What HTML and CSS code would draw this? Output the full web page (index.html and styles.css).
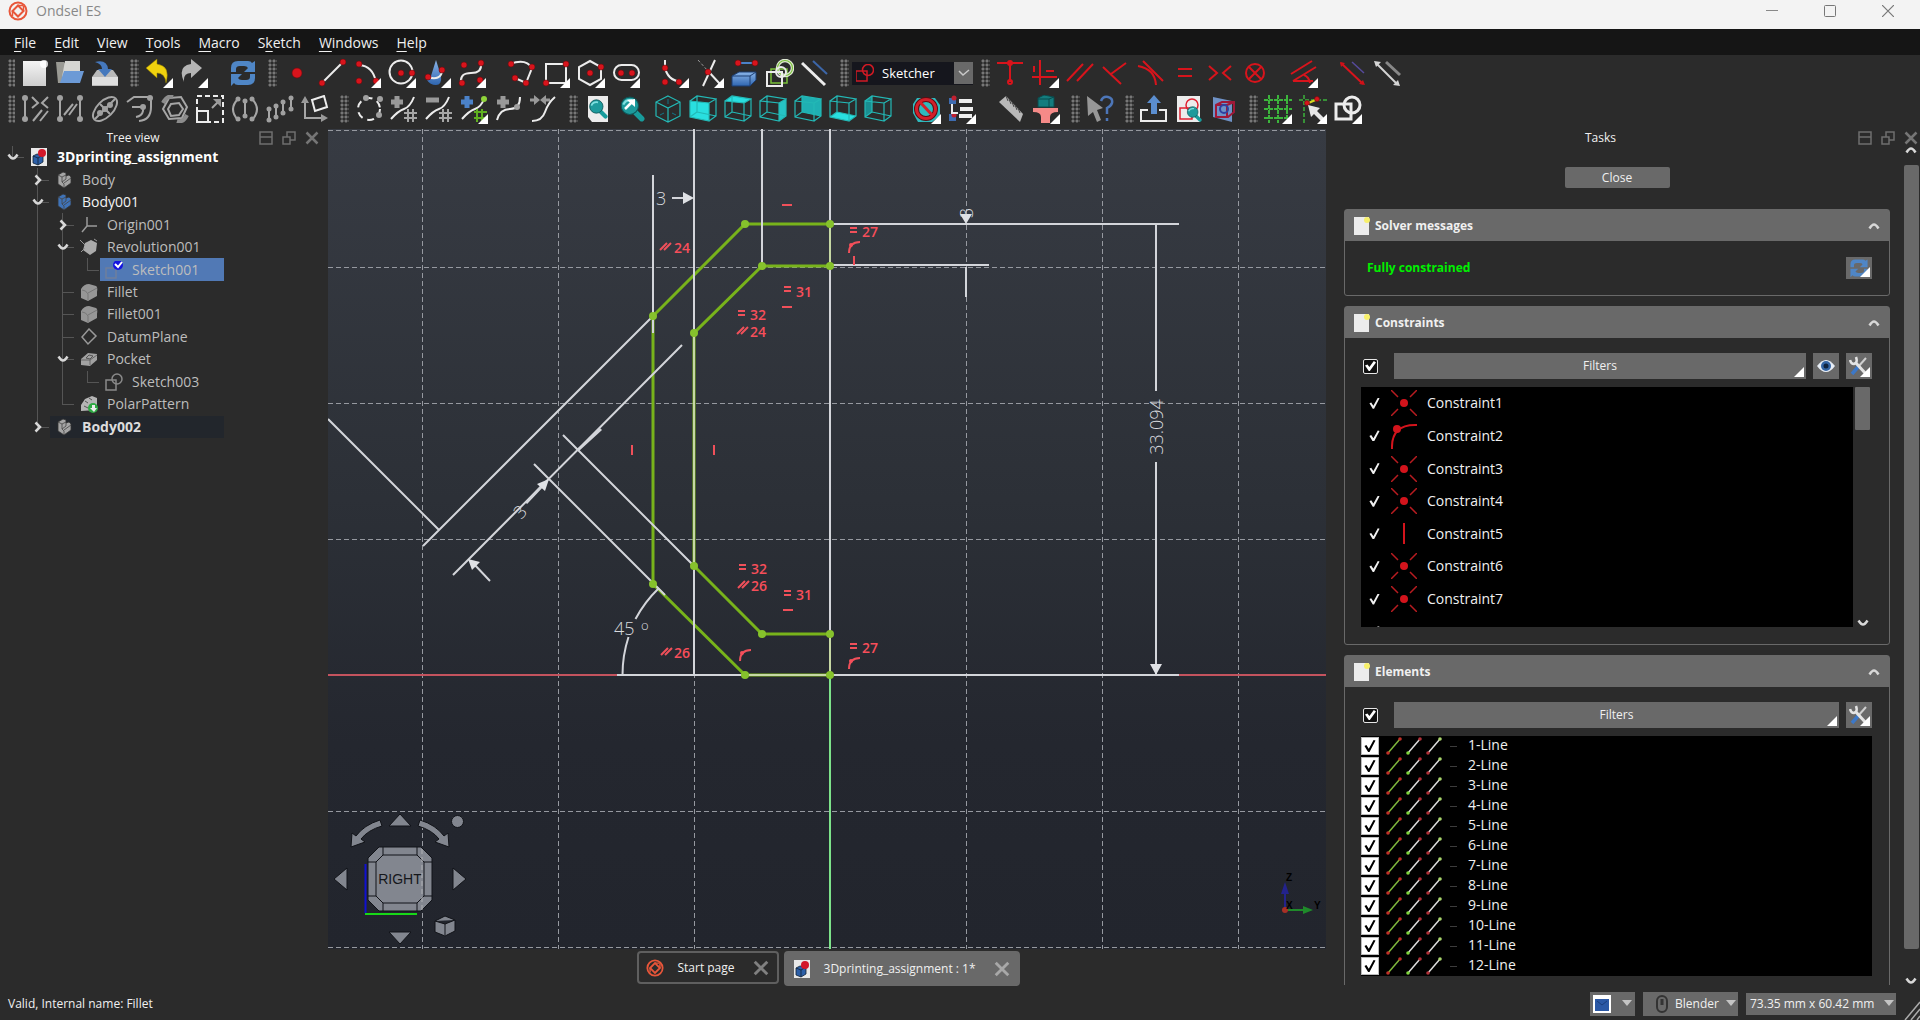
FILE: index.html
```html
<!DOCTYPE html>
<html lang="en">
<head>
<meta charset="utf-8">
<title>Ondsel ES</title>
<link rel="stylesheet" href="styles.css">
</head>
<body>
<svg class="defs" aria-hidden="true">
  <defs>
    <linearGradient id="gBlue" x1="0" y1="0" x2="0" y2="1"><stop offset="0" stop-color="#8ab4e8"/><stop offset="1" stop-color="#2f66b0"/></linearGradient>
    <linearGradient id="gGrey" x1="0" y1="0" x2="0" y2="1"><stop offset="0" stop-color="#f4f4f4"/><stop offset="1" stop-color="#cdcdcd"/></linearGradient>
  </defs>
  <symbol id="logo" viewBox="0 0 20 20"><circle cx="10" cy="10" r="8.500" fill="none" stroke="#e8563a" stroke-width="2"/><path d="M10 4.500l5.500 5.500-5.500 5.500L4.500 10z" fill="none" stroke="#e8563a" stroke-width="2"/><path d="M4.500 10v5M10 4.500h5M15.500 10V5" stroke="#e8563a" stroke-width="1.500"/></symbol>
  <symbol id="doc" viewBox="0 0 18 18"><path d="M1 0h16v18H1z" fill="#e9e9e9"/><path d="M3 8l4-2 6 1v7l-5 3-5-2z" fill="#2c5fa8" stroke="#123" stroke-width=".8"/><path d="M3 8l5 2v7M8 10l5-3" fill="none" stroke="#123" stroke-width=".8"/><circle cx="12" cy="5" r="4" fill="#d3182a"/></symbol>
  <symbol id="wire" viewBox="0 0 28 28"><path d="M1 6l19 2v18L1 22zM1 6L8 1l19 3-7 4M27 4v17l-7 5M8 1v16l-7 5M8 17l19 4" fill="none" stroke="#23b9b6" stroke-width="1.200"/></symbol>
  <symbol id="body" viewBox="0 0 18 18"><path d="M3 4l5-3 3 1v3l3-1 2 2v6l-7 5-6-4z" fill="currentColor" stroke="#333" stroke-width=".8"/><path d="M3 4l4 2v5l2 2v4M7 6l4-2M9 12l7-5M7 11l4-3V5" fill="none" stroke="#444" stroke-width=".8"/></symbol>
  <symbol id="fillet" viewBox="0 0 18 18"><path d="M1 6q3-5 8-5l7 2q2 1 1 6v4l-9 5-7-3z" fill="#969696"/><path d="M2 7q4 0 6 4v6M8 10l9-5" fill="none" stroke="#777"/></symbol>
  <symbol id="sketch" viewBox="0 0 18 18"><path d="M1 7h10v10H1z" fill="none" stroke="currentColor" stroke-width="1.500"/><circle cx="12" cy="6" r="5" fill="none" stroke="currentColor" stroke-width="1.500"/></symbol>
  <symbol id="note" viewBox="0 0 16 20"><path d="M0 1h15v18H0z" fill="#ececec"/><circle cx="13" cy="4" r="3" fill="#f7f06a"/></symbol>
  <symbol id="up" viewBox="0 0 12 8"><path d="M1.500 6.500Q4 2.500 6 2.500T10.500 6.500" fill="none" stroke="#d8d8d8" stroke-width="2.500"/></symbol>
  <symbol id="down" viewBox="0 0 12 8"><path d="M1.500 1.500Q4 5.500 6 5.500T10.500 1.500" fill="none" stroke="#d8d8d8" stroke-width="2.500"/></symbol>
  <symbol id="right" viewBox="0 0 8 12"><path d="M1.500 1.500L6 6l-4.500 4.500" fill="none" stroke="#d8d8d8" stroke-width="2.500"/></symbol>
  <symbol id="dock" viewBox="0 0 14 14"><path d="M1 1h12v12H1zM1 6h12" fill="none" stroke="#6f6f6f" stroke-width="1.500"/></symbol>
  <symbol id="float" viewBox="0 0 14 14"><path d="M1 6h7v7H1zM5 6V1h8v8H8" fill="none" stroke="#6f6f6f" stroke-width="1.500"/></symbol>
  <symbol id="x" viewBox="0 0 14 14"><path d="M1.500 1.500l11 11m0-11l-11 11" stroke="currentColor" stroke-width="2.500"/></symbol>
  <symbol id="point" viewBox="0 0 26 26"><path d="M0 0l7 7M26 0l-7 7M0 26l7-7M26 26l-7-7" stroke="#b81c20" stroke-width="1.500"/><circle cx="13" cy="13" r="4" fill="#d3141c"/></symbol>
  <symbol id="on-arc" viewBox="0 0 26 26"><path d="M1 26Q0 1 26 2" fill="none" stroke="#d3141c" stroke-width="2"/><circle cx="6" cy="6" r="4" fill="#d3141c"/></symbol>
  <symbol id="vert" viewBox="0 0 26 26"><path d="M13 2v21" stroke="#d3141c" stroke-width="2"/></symbol>
  <symbol id="lines" viewBox="0 0 56 18">
    <path d="M2 16L14 2" stroke="#7fb83c" stroke-width="1.500"/><circle cx="2" cy="16" r="1.800" fill="#c23028"/><circle cx="14" cy="2" r="1.800" fill="#c23028"/>
    <path d="M22 16L34 2" stroke="#ddd" stroke-width="1.500"/><circle cx="22" cy="16" r="1.800" fill="#7fd63c"/><circle cx="34" cy="2" r="1.800" fill="#b23038"/>
    <path d="M42 16L54 2" stroke="#ddd" stroke-width="1.500"/><circle cx="42" cy="16" r="1.800" fill="#b23038"/><circle cx="54" cy="2" r="1.800" fill="#a9d66c"/>
  </symbol>
  <symbol id="tools" viewBox="0 0 20 20"><path d="M17 2l-8 9" stroke="#cfcfcf" stroke-width="2"/><path d="M9 11l-6 7" stroke="#3c78c8" stroke-width="3.500"/><path d="M6 6l11 12" stroke="#e4e4e4" stroke-width="3"/><path d="M1 4q1 4 4 4 4-1 2-7" fill="none" stroke="#e4e4e4" stroke-width="2.500"/></symbol>
  <symbol id="sync" viewBox="0 0 28 28"><path d="M2 13V9q0-7 7-7h10q3 0 4 2l3-2v11H15l4-4q-1-2-4-2h-4q-4 0-4 3v3zM26 15v4q0 7-7 7H9q-3 0-4-2l-3 3V15h11l-4 4q1 2 4 2h4q4 0 4-3v-3z" fill="#4f86c6"/></symbol>
  <symbol id="glass" viewBox="0 0 24 24"><path d="M15 15l6 6" stroke="#189c9c" stroke-width="5" stroke-linecap="round"/><circle cx="10" cy="9" r="8" fill="#1d9a9c" stroke="#0e5658"/><path d="M4 8q2-5 8-4" fill="none" stroke="#7fe0e0" stroke-width="2"/></symbol>
  <symbol id="caret" viewBox="0 0 10 7"><path d="M0 0h10L5 6z" fill="#c4c4c4"/></symbol>
</svg>

<div class="app">
  <header class="titlebar">
    <svg class="logo"><use href="#logo"/></svg>
    <span class="app-name">Ondsel ES</span>
    <div class="win">
      <button aria-label="Minimize"><svg viewBox="0 0 12 12"><path d="M0 5.500h12" stroke="#888"/></svg></button>
      <button aria-label="Maximize"><svg viewBox="0 0 12 12"><rect x=".5" y=".5" width="11" height="11" rx="1" fill="none" stroke="#777"/></svg></button>
      <button aria-label="Close window"><svg viewBox="0 0 12 12"><path d="M0 0l12 12M12 0L0 12" stroke="#777" stroke-width="1.200"/></svg></button>
    </div>
  </header>

  <nav class="menubar">
    <button><u>F</u>ile</button><button><u>E</u>dit</button><button><u>V</u>iew</button><button><u>T</u>ools</button><button><u>M</u>acro</button><button>S<u>k</u>etch</button><button><u>W</u>indows</button><button><u>H</u>elp</button>
  </nav>

  <div class="toolbars">
    <div class="toolbar">
      <i class="grip"></i>
      <button aria-label="New"><svg viewBox="0 0 28 28"><path d="M2 2h23v25H2z" fill="url(#gGrey)"/><circle cx="23" cy="5" r="4" fill="#fff" opacity=".8"/></svg></button>
      <button aria-label="Open"><svg viewBox="0 0 28 28"><path d="M0 3h8l2 3v18H2z" fill="#9a9a94"/><path d="M9 2h15v16H6z" fill="#d6d6d2"/><path d="M4 24l4-12h20l-4 12z" fill="#6c9ad6"/></svg></button>
      <button aria-label="Save"><svg viewBox="0 0 28 28"><path d="M6 11h16l5 7v9H1v-9z" fill="#b9b9b9"/><path d="M1 18h26v8H1z" fill="#dedede"/><path d="M4 3q12-3 13 7h4l-7 8-7-8h4Q11 5 4 3z" fill="#4578bd"/></svg></button>
      <i class="grip"></i>
      <button class="drop" aria-label="Undo"><svg viewBox="0 0 28 28"><path d="M1 9L12 0v5q14 2 9 19-1-10-9-10v5z" fill="#f0d20e" stroke="#8a7900" stroke-width=".5"/></svg></button>
      <button class="drop" aria-label="Redo"><svg viewBox="0 0 28 28"><path d="M22 9L11 0v5Q-3 7 4 23q-1-9 7-9v5z" fill="#b5b5b5"/></svg></button>
      <i class="sep"></i>
      <button aria-label="Refresh"><svg viewBox="0 0 28 28"><use href="#sync"/></svg></button>
      <i class="grip"></i>
      <button aria-label="Point"><svg viewBox="0 0 28 28"><circle class="rd" cx="14" cy="14" r="5"/></svg></button>
      <button aria-label="Line"><svg viewBox="0 0 28 28"><path class="w" d="M4 24L24 4"/><circle class="rd" cx="4" cy="24" r="3"/><circle class="rd" cx="25" cy="3" r="3"/></svg></button>
      <button class="drop" aria-label="Arc"><svg viewBox="0 0 28 28"><path class="w" d="M6 6q14 1 17 17"/><circle class="rd" cx="6" cy="5" r="3"/><circle class="rd" cx="6" cy="22" r="3"/><circle class="rd" cx="23" cy="22" r="3"/></svg></button>
      <button class="drop" aria-label="Circle"><svg viewBox="0 0 28 28"><circle class="w" cx="13" cy="13" r="11.500"/><circle class="rd" cx="13" cy="14" r="3"/><circle class="rd" cx="24" cy="14" r="3"/></svg></button>
      <button class="drop" aria-label="Conic"><svg viewBox="0 0 28 28"><path d="M13 1l5 16q1 9-5 9T4 21q2-1 4-4z" fill="url(#gBlue)"/><path class="w" d="M4 18q14 4 15-6"/><circle class="rd" cx="5" cy="18" r="3"/><circle class="rd" cx="19" cy="11" r="3"/></svg></button>
      <button class="drop" aria-label="B-spline"><svg viewBox="0 0 28 28"><path class="w" d="M3 23Q2 14 13 14T23 5"/><circle class="rd" cx="4" cy="24" r="3"/><circle class="rd" cx="6" cy="6" r="3"/><circle class="rd" cx="23" cy="4" r="3"/><circle class="rd" cx="22" cy="21" r="3"/></svg></button>
      <i class="sep"></i>
      <button aria-label="Polyline"><svg viewBox="0 0 28 28"><path class="w" d="M3 5q16-6 22 4l-6 15-11-5"/><circle class="rd" cx="4" cy="5" r="3"/><circle class="rd" cx="25" cy="8" r="3"/><circle class="rd" cx="8" cy="19" r="3"/><circle class="rd" cx="19" cy="24" r="3"/></svg></button>
      <button class="drop" aria-label="Rectangle"><svg viewBox="0 0 28 28"><path class="w" d="M4 5h20v19H4z"/><circle class="rd" cx="24" cy="5" r="3"/><circle class="rd" cx="4" cy="24" r="3"/></svg></button>
      <button class="drop" aria-label="Polygon"><svg viewBox="0 0 28 28"><path class="w" d="M13 2l11 6v12l-11 6-11-6V8z"/><circle class="rd" cx="13" cy="14" r="3"/><circle class="rd" cx="24" cy="8" r="3"/></svg></button>
      <button class="drop" aria-label="Slot"><svg viewBox="0 0 28 28"><rect class="w" x="2" y="6" width="25" height="15" rx="7.500"/><circle class="rd" cx="9" cy="14" r="3"/><circle class="rd" cx="20" cy="14" r="3"/></svg></button>
      <i class="sep"></i>
      <button class="drop" aria-label="Fillet"><svg viewBox="0 0 28 28"><path class="w" d="M4 1v7q2 13 16 15"/><circle class="rd" cx="4" cy="9" r="3"/><circle class="rd" cx="4" cy="23" r="3"/><circle class="rd" cx="18" cy="23" r="3"/></svg></button>
      <button class="drop" aria-label="Trim"><svg viewBox="0 0 28 28"><path class="w" d="M19 1L7 27M12 12l12 13"/><path d="M2 1l10 11" stroke="#999" stroke-dasharray="3 2"/><circle class="rd" cx="12" cy="13" r="3"/></svg></button>
      <button aria-label="External geometry"><svg viewBox="0 0 28 28"><path d="M1 17l7-4h17v8l-6 6H1z" fill="url(#gBlue)" stroke="#1d3f73"/><path d="M1 17h18v10M19 17l6-4" fill="none" stroke="#1d3f73"/><path d="M8 4h16" stroke="#4b82c9" stroke-width="2"/><circle class="rd" cx="7" cy="4" r="3"/><circle class="rd" cx="24" cy="4" r="3"/></svg></button>
      <button aria-label="Carbon copy"><svg viewBox="0 0 28 28"><path d="M5 10h16v14H5z" fill="none" stroke="#7ac03a" stroke-width="1.500"/><circle cx="19" cy="9" r="7.500" fill="none" stroke="#dfe8d4" stroke-width="3.500"/><circle cx="19" cy="9" r="7.500" fill="none" stroke="#7ac03a" stroke-width="1.200"/><path class="w" d="M1 13h15v14H1z"/><circle class="w" cx="15" cy="13" r="5"/></svg></button>
      <button aria-label="Construction"><svg viewBox="0 0 28 28"><path class="w heavy" d="M1 4l23 22"/><path d="M12 2l14 13" stroke="#3c66a8" stroke-width="2"/></svg></button>
      <i class="grip"></i>
      <div class="combo">
        <svg viewBox="0 0 18 18"><path d="M0 7h11v10H0z" fill="none" stroke="#d01a24" stroke-width="1.500"/><circle cx="12" cy="6" r="5.500" fill="none" stroke="#d01a24" stroke-width="1.500"/></svg>
        <select aria-label="Workbench"><option>Sketcher</option></select>
        <span class="combo-arrow"><svg viewBox="0 0 12 8"><path d="M1 2l4 4 6-5" fill="none" stroke="#c9c9c9" stroke-width="1.500"/></svg></span>
      </div>
      <i class="grip"></i>
      <button aria-label="Coincident"><svg viewBox="0 0 28 28"><path class="r" d="M1 4h26M14 6v17"/><circle class="r" cx="14" cy="4" r="2"/><circle class="r" cx="14" cy="23" r="2"/></svg></button>
      <button class="drop" aria-label="Horizontal vertical"><svg viewBox="0 0 28 28"><path class="r" d="M9 1v25M3 7v6M1 18h25M15 12h8"/></svg></button>
      <button aria-label="Parallel"><svg viewBox="0 0 28 28"><path class="r" d="M1 22L17 5M11 22L27 5"/></svg></button>
      <button aria-label="Perpendicular"><svg viewBox="0 0 28 28"><path class="r" d="M2 8l18 17M10 15L25 4"/></svg></button>
      <button aria-label="Tangent"><svg viewBox="0 0 28 28"><path class="r" d="M7 2l20 20M2 7q17 3 18 19"/></svg></button>
      <button aria-label="Equal"><svg viewBox="0 0 28 28"><path class="r" d="M7 10h14M7 17h14"/></svg></button>
      <button aria-label="Symmetric"><svg viewBox="0 0 28 28"><path class="r" d="M3 7l8 7-8 7M25 7l-8 7 8 7"/></svg></button>
      <button aria-label="Block"><svg viewBox="0 0 28 28"><circle class="r" cx="14" cy="14" r="9"/><path class="r" d="M8 8l12 12M20 8L8 20"/></svg></button>
      <i class="sep"></i>
      <button class="drop" aria-label="Dimension"><svg viewBox="0 0 28 28"><path class="r" d="M3 22L26 8M3 22h20M14 16q5 2 6 8M1 15L22 2"/></svg></button>
      <i class="sep"></i>
      <button aria-label="Toggle driving"><svg viewBox="0 0 28 28"><path class="r" d="M2 4l22 21"/><path d="M13 3l12 11" stroke="#564a9c" stroke-width="1.500"/><path d="M1 3l5 1-4 4zM26 26l-6-1 4-4z" fill="#d01018"/></svg></button>
      <button aria-label="Toggle active"><svg viewBox="0 0 28 28"><path d="M2 4l21 21" stroke="#d5d5d5" stroke-width="2"/><path d="M12 3l14 13" stroke="#888" stroke-width="3"/><path d="M0 2l7 1-5 5zM26 27l-7-1 5-5z" fill="#d5d5d5"/></svg></button>
    </div>

    <div class="toolbar">
      <i class="grip"></i>
      <button aria-label="Constraints tool"><svg viewBox="0 0 28 28"><path class="g" d="M4 4v20M11 2l6 6-6 5M27 2l-6 6 6 5M12 26l9-11M19 26l8-10"/><circle class="gd" cx="4" cy="3" r="3"/><circle class="gd" cx="4" cy="24" r="3"/></svg></button>
      <button aria-label="Elements tool"><svg viewBox="0 0 28 28"><path class="g" d="M4 4v20M24 4v20M8 20l9-11M13 20l8-11"/><circle class="gd" cx="4" cy="3" r="3"/><circle class="gd" cx="4" cy="24" r="3"/><circle class="gd" cx="24" cy="3" r="3"/><circle class="gd" cx="24" cy="24" r="3"/></svg></button>
      <button aria-label="Internal geometry"><svg viewBox="0 0 28 28"><ellipse class="g" cx="14" cy="14" rx="15" ry="8" transform="rotate(-45 14 14)"/><path class="g" d="M4 24L24 4M9 9l10 10"/><circle class="gd" cx="14" cy="14" r="3"/><circle class="gd" cx="9" cy="18" r="3"/><circle class="gd" cx="19" cy="10" r="3"/></svg></button>
      <button aria-label="Offset"><svg viewBox="0 0 28 28"><path class="g" d="M1 7l7-5h17v10q0 13-12 14M6 12h11v4q-1 5-7 6"/><circle class="gd" cx="24" cy="3" r="3"/><circle class="gd" cx="17" cy="12" r="3"/></svg></button>
      <button aria-label="Rotate"><svg viewBox="0 0 28 28"><path class="g" d="M8 3l12-1 6 10-5 11-13 1-6-10zM10 9l8-1 4 6-4 6-8 1-3-7z"/><path d="M2 8q4-8 10-6M26 20q-4 8-10 6" fill="none" stroke="#8c8c8c" stroke-width="4"/></svg></button>
      <button aria-label="Scale"><svg viewBox="0 0 28 28"><path class="w" d="M1 1h26v26H1z" stroke-dasharray="5 3"/><path class="w" d="M1 16h11v11H1z"/><path class="g" d="M16 13l7-7"/><path d="M25 4v8l-8-8z" fill="#999"/></svg></button>
      <button aria-label="Symmetry"><svg viewBox="0 0 28 28"><path class="g" d="M7 4q-10 10 0 21M21 4q10 10 0 21M14 5v18"/><circle class="gd" cx="7" cy="4" r="2.500"/><circle class="gd" cx="7" cy="24" r="2.500"/><circle class="gd" cx="21" cy="4" r="2.500"/><circle class="gd" cx="21" cy="24" r="2.500"/><circle class="gd" cx="14" cy="6" r="2.500"/><circle class="gd" cx="14" cy="21" r="2.500"/></svg></button>
      <button aria-label="Array"><svg viewBox="0 0 28 28"><path class="g" d="M3 15v10M10 12v10M17 7v11M25 3v11"/><circle class="gd" cx="3" cy="14" r="2.500"/><circle class="gd" cx="3" cy="25" r="2.500"/><circle class="gd" cx="10" cy="11" r="2.500"/><circle class="gd" cx="10" cy="22" r="2.500"/><circle class="gd" cx="17" cy="7" r="2.500"/><circle class="gd" cx="17" cy="18" r="2.500"/><circle class="gd" cx="25" cy="3" r="2.500"/><circle class="gd" cx="25" cy="14" r="2.500"/></svg></button>
      <button aria-label="Remove alignment"><svg viewBox="0 0 28 28"><path class="g" d="M4 5v18h20"/><path d="M0 8l4-7 4 7zM20 19l7 4-7 4z" fill="#999"/><path class="w" d="M11 5l12-4 3 11-12 4z"/></svg></button>
      <i class="grip"></i>
      <button aria-label="To B-spline"><svg viewBox="0 0 28 28"><circle class="w" cx="14" cy="14" r="11" stroke-dasharray="7 5"/><circle class="gd" cx="11" cy="3" r="3"/><circle class="gd" cx="25" cy="4" r="3"/><circle class="gd" cx="24" cy="20" r="3"/></svg></button>
      <button aria-label="Increase degree"><svg viewBox="0 0 28 28"><path d="M7 1v12M1 7h12" stroke="#999" stroke-width="5"/><path class="w" d="M1 24q7-8 13-10T24 2"/><path class="g" d="M18 14v13M23 14v13M14 18h13M14 23h13"/></svg></button>
      <button aria-label="Decrease degree"><svg viewBox="0 0 28 28"><path d="M1 5h13" stroke="#999" stroke-width="5"/><path class="w" d="M1 24q7-8 13-10T24 2"/><path class="g" d="M18 14v13M23 14v13M14 18h13M14 23h13"/></svg></button>
      <button class="drop" aria-label="Knot multiplicity"><svg viewBox="0 0 28 28"><path d="M7 1v12M1 7h12" stroke="#4b82c9" stroke-width="5"/><path class="w" d="M2 24q7-8 13-10T24 4"/><path d="M17 14v13M22 14v13M14 17h13M14 23h13" stroke="#5fb020" stroke-width="2"/><circle cx="24" cy="4" r="3" fill="#8fd43a"/></svg></button>
      <button aria-label="Insert knot"><svg viewBox="0 0 28 28"><path d="M8 1v12M2 7h12" stroke="#999" stroke-width="5"/><path class="w" d="M2 25q3-11 13-11T25 2"/><circle class="gd" cx="22" cy="12" r="3"/></svg></button>
      <button aria-label="Join curves"><svg viewBox="0 0 28 28"><path d="M0 5h7M20 5h-7" stroke="#999" stroke-width="3"/><path d="M4 0l6 5-6 5zM16 0l-6 5 6 5z" fill="#999"/><path class="w" d="M2 26q10 0 13-9T25 2"/></svg></button>
      <i class="grip"></i>
      <button aria-label="Fit all"><svg viewBox="0 0 28 28"><path d="M4 1h20v26H8l-4-5z" fill="#ececec"/><svg x="4" y="4" width="20" height="20"><use href="#glass"/></svg></svg></button>
      <button aria-label="Fit selection"><svg viewBox="0 0 28 28"><use href="#glass" width="26" height="28"/><path d="M6 14l8-8" stroke="#fff" stroke-width="2.500"/><path d="M16 4v8L8 5z" fill="#fff"/></svg></button>
      <button aria-label="Isometric"><svg viewBox="0 0 28 28"><path d="M14 1l12 6v14l-12 6-12-6V7zM2 7l12 6 12-6M14 13v14" fill="none" stroke="#23b9b6" stroke-width="1.200"/><path d="M14 4v5M6 20l4-2M22 20l-4-2" stroke="#178"/></svg></button>
      <button aria-label="Front"><svg viewBox="0 0 28 28"><path d="M1 6l19 2v18L1 22z" fill="#29dfe0"/><use href="#wire"/></svg></button>
      <button aria-label="Top"><svg viewBox="0 0 28 28"><path d="M1 6l7-5 19 3-7 4z" fill="#29dfe0"/><use href="#wire"/></svg></button>
      <button aria-label="Right"><svg viewBox="0 0 28 28"><path d="M20 8l7-4v17l-7 5z" fill="#26c3c5"/><use href="#wire"/></svg></button>
      <button aria-label="Rear"><svg viewBox="0 0 28 28"><path d="M8 1l19 3v17L8 17z" fill="#1fb0b3"/><use href="#wire"/></svg></button>
      <button aria-label="Bottom"><svg viewBox="0 0 28 28"><path d="M1 22l7-5 19 4-7 5z" fill="#29dfe0"/><use href="#wire"/></svg></button>
      <button aria-label="Left"><svg viewBox="0 0 28 28"><path d="M1 6l7-5v16l-7 5z" fill="#1a8f92"/><use href="#wire"/></svg></button>
      <i class="sep"></i>
      <button class="drop" aria-label="Draw style"><svg viewBox="0 0 28 28"><path d="M4 3h18l5 7v11l-8 6H5l-5-9V9z" fill="#2fb9bd"/><circle cx="13" cy="14" r="9.500" fill="none" stroke="#5b0d12" stroke-width="5"/><circle cx="13" cy="14" r="9.500" fill="none" stroke="#d2202a" stroke-width="3"/><path d="M7 7l13 14" stroke="#d2202a" stroke-width="3"/></svg></button>
      <button class="drop" aria-label="Selection filter"><svg viewBox="0 0 28 28"><path d="M1 3h7v6H1zM1 19h7v7H1z" fill="#3e6cb0"/><circle cx="6" cy="3" r="2.500" fill="#c02030"/><circle cx="6" cy="20" r="2.500" fill="#c02030"/><path class="w" d="M4 9v9h6"/><path d="M11 6h13M12 14h13M11 21h13" stroke="#eee" stroke-width="4"/></svg></button>
      <i class="sep"></i>
      <button aria-label="Measure"><svg viewBox="0 0 28 28"><path d="M2 7l7-6 17 18-3 8z" fill="#b8b8b8"/><path d="M9 1l2 5m1-2l2 5m1-2l2 5m1-2l2 5m1-2l2 5" stroke="#444"/></svg></button>
      <button class="drop" aria-label="Appearance"><svg viewBox="0 0 28 28"><path d="M6 3l6-3 10 2v10H6z" fill="#147c7e" stroke="#0a4a4c"/><path d="M6 4h11v8M17 4l5-2" fill="none" stroke="#0a4a4c"/><path d="M1 13h25v4q-8 0-8 5v6H9v-6q0-5-8-5z" fill="#f58a88"/></svg></button>
      <i class="grip"></i>
      <button aria-label="What's this"><svg viewBox="0 0 28 28"><path d="M1 1l16 12-6 2 4 10-4 2-4-10-5 4z" fill="#979797"/><path d="M15 6q2-5 7-4t4 6q-1 3-5 5v6M21 23v3" fill="none" stroke="#4d76b8" stroke-width="2.500"/></svg></button>
      <i class="grip"></i>
      <button aria-label="Leave sketch"><svg viewBox="0 0 28 28"><path class="w" d="M8 15H1v11h25V15h-7"/><path d="M14 0l7 8h-4v11h-6V8H7z" fill="#5b8ed0"/></svg></button>
      <button aria-label="View sketch"><svg viewBox="0 0 28 28"><path d="M2 1h23v26H2z" fill="#ececec"/><path d="M5 13h12v11H5z" fill="none" stroke="#e02030" stroke-width="1.500"/><circle cx="17" cy="10" r="6" fill="none" stroke="#e02030" stroke-width="1.500"/><use href="#glass" x="11" y="11" width="16" height="16"/></svg></button>
      <button aria-label="View section"><svg viewBox="0 0 28 28"><path d="M3 2l19 4v21L3 22z" fill="#6f92c6"/><path d="M6 10l6-3h12v10l-6 5H6zM6 10h11v12M17 10l7-3" fill="none" stroke="#a01838" stroke-width="2"/><circle cx="14" cy="14" r="4" fill="none" stroke="#3040a0" stroke-width="2"/></svg></button>
      <i class="grip"></i>
      <button class="drop" aria-label="Grid"><svg viewBox="0 0 28 28"><path d="M5 0v28M14 0v28M23 0v28M0 5h28M0 14h28M0 23h28" stroke="#3cb43c" stroke-width="2" stroke-dasharray="4 1"/></svg></button>
      <button class="drop" aria-label="Snap"><svg viewBox="0 0 28 28"><path d="M0 5h28M5 0v28" stroke="#3cb43c" stroke-width="1.500" stroke-dasharray="4 2"/><path d="M7 9l12-5" stroke="#d8d820" stroke-width="2"/><circle class="rd" cx="8" cy="8" r="2.500"/><circle class="rd" cx="18" cy="4" r="2.500"/><path d="M9 10l12 3-3 3 7 7-3 3-7-7-3 3z" fill="#e6e6e6"/></svg></button>
      <button class="drop" aria-label="Rendering order"><svg viewBox="0 0 28 28"><path class="w heavy" d="M2 9h15v15H2z"/><circle class="w heavy" cx="18" cy="10" r="8"/></svg></button>
    </div>
  </div>

  <main class="main">
    <aside class="tree-panel">
      <div class="dock-head">
        <h2>Tree view</h2>
        <button aria-label="Collapse"><svg><use href="#dock"/></svg></button><button aria-label="Float"><svg><use href="#float"/></svg></button><button aria-label="Close tree view"><svg><use href="#x"/></svg></button>
      </div>
      <ul class="tree">
        <li><span class="g t"><svg class="dn"><use href="#down"/></svg></span><a href="#" class="node root"><svg><use href="#doc"/></svg>3Dprinting_assignment</a></li>
        <li><span class="g"></span><span class="g t"><svg class="rt"><use href="#right"/></svg></span><a href="#" class="node"><svg class="c-grey"><use href="#body"/></svg>Body</a></li>
        <li><span class="g"></span><span class="g t"><svg class="dn"><use href="#down"/></svg></span><a href="#" class="node lit"><svg class="c-blue"><use href="#body"/></svg>Body001</a></li>
        <li><span class="g"></span><span class="g v"></span><span class="g t"><svg class="rt"><use href="#right"/></svg></span><a href="#" class="node"><svg viewBox="0 0 18 18"><path d="M7 1v9h10M7 10l-5 6" fill="none" stroke="#9a9a9a" stroke-width="1.500"/></svg>Origin001</a></li>
        <li><span class="g"></span><span class="g v"></span><span class="g t"><svg class="dn"><use href="#down"/></svg></span><a href="#" class="node"><svg viewBox="0 0 18 18"><path d="M5 5l6-3 6 3-1 8-6 4-7-5z" fill="#ababab"/><path d="M0 2l5 5M1 14l4-4M14 1l3 2" stroke="#999"/></svg>Revolution001</a></li>
        <li><span class="g"></span><span class="g v"></span><span class="g v"></span><span class="g l"></span><a href="#" class="node selected"><svg viewBox="0 0 18 18"><path d="M1 7h10v10H1z" fill="none" stroke="#6f7f9c" stroke-width="1.500"/><circle cx="13" cy="4" r="5" fill="#1414e0"/><path d="M10 3l3 3 4-5" fill="none" stroke="#fff" stroke-width="2"/></svg>Sketch001</a></li>
        <li><span class="g"></span><span class="g v"></span><span class="g t"></span><a href="#" class="node"><svg><use href="#fillet"/></svg>Fillet</a></li>
        <li><span class="g"></span><span class="g v"></span><span class="g t"></span><a href="#" class="node"><svg><use href="#fillet"/></svg>Fillet001</a></li>
        <li><span class="g"></span><span class="g v"></span><span class="g t"></span><a href="#" class="node"><svg viewBox="0 0 18 18"><path d="M9 1l7 7-8 8-6-7z" fill="none" stroke="#999" stroke-width="1.500"/></svg>DatumPlane</a></li>
        <li><span class="g"></span><span class="g v"></span><span class="g t"><svg class="dn"><use href="#down"/></svg></span><a href="#" class="node"><svg viewBox="0 0 18 18"><path d="M1 9l7-6 9 1v6l-7 6-9-1z" fill="#a2a2a2"/><path d="M6 8l3-3 4 1-3 3z" fill="none" stroke="#555"/><path d="M1 10h9v5M10 10l7-5" fill="none" stroke="#555" stroke-width=".8"/></svg>Pocket</a></li>
        <li><span class="g"></span><span class="g v"></span><span class="g v"></span><span class="g l"></span><a href="#" class="node"><svg class="c-dim"><use href="#sketch"/></svg>Sketch003</a></li>
        <li><span class="g"></span><span class="g v"></span><span class="g l"></span><a href="#" class="node"><svg viewBox="0 0 18 18"><path d="M1 16V10l4-6 7-3 5 2v12z" fill="#b5b5b5"/><path d="M5 6l3 2M4 11l4 2M9 3l3 2" stroke="#555"/><circle cx="13" cy="13" r="5" fill="#2faa44"/><path d="M12 10h3v3h2l-3 4-4-4h2z" fill="#eee"/></svg>PolarPattern</a></li>
        <li><span class="g"></span><span class="g l"><svg class="rt"><use href="#right"/></svg></span><a href="#" class="node active"><svg class="c-grey"><use href="#body"/></svg>Body002</a></li>
      </ul>
    </aside>

    <section class="center">
      <svg class="view3d" viewBox="328 129 998 820" preserveAspectRatio="xMidYMid slice">
        <g class="grid">
          <path d="M422 129v820M558 129v820M694 129v820M966 129v820M1102 129v820M1238 129v820"/>
          <path d="M328 130h998M328 267h998M328 403h998M328 539h998M328 811h998M328 947h998"/>
        </g>
        <path class="axis-x" d="M328 675h998"/>
        <path class="axis-y" d="M830 675v274"/>

        <g class="edge">
          <path d="M653 584V316L745 224H830M653 584l92 91h85M830 266H762L694 333V566l68 68h68"/>
        </g>
        <g class="dim">
          <path d="M653 175v158M762 129v137M694 129v546M830 129v546"/>
          <path d="M617 675h562M830 224h349M830 265h159M966 267v30M1156 224v167M1156 462v212M672 198h14"/>
          <path d="M328 419l111 111M653 316L423 546M682 345L453 575M563 435l131 131M534 464l131 131M473 563l17 18"/>
          <path d="M578 450l23-21M526 503l17-18" stroke-width="3"/>
          <path d="M658.500 588.500A122 122 0 0 0 635.500 619M628.500 637A122 122 0 0 0 622.500 675"/>
        </g>
        <g class="edge pale"><path d="M694 333V566M830 224v42M830 634v41M745 675h85"/></g>
        <g class="vertex"><circle cx="745" cy="224" r="4"/><circle cx="830" cy="224" r="4"/><circle cx="762" cy="266" r="4"/><circle cx="830" cy="266" r="4"/><circle cx="653" cy="316" r="4"/><circle cx="694" cy="333" r="4"/><circle cx="694" cy="566" r="4"/><circle cx="653" cy="584" r="4"/><circle cx="762" cy="634" r="4"/><circle cx="830" cy="634" r="4"/><circle cx="745" cy="675" r="4"/><circle cx="830" cy="675" r="4"/></g>
        <g class="heads"><path d="M694 198l-11-6v12zM966 224l-6-10h12zM1156 675l-6-11h12zM549 479l-4 12-8-7zM468 559l12 3-8 8z"/></g>
        <g class="dim-text">
          <text x="656" y="205">3</text>
          <text transform="translate(973 218) rotate(-90)">3</text>
          <text transform="translate(1163 427) rotate(-90)" text-anchor="middle">33.094</text>
          <text transform="translate(521 520) rotate(-45)">3</text>
          <text x="614" y="635">45</text><text x="641" y="630" font-size="13">o</text>
        </g>
        <g class="marks">
          <path d="M782 205h10M782 307h10M783 610h10M632 445v10M714 445v10M854 256v9M850 228h7M850 232h7M784 287h7M784 291h7M738 311h7M738 315h7M739 565h7M739 569h7M784 591h7M784 595h7M850 644h7M850 648h7"/>
          <path d="M660 250l7-7M664 250l7-7M737 334l7-7M741 334l7-7M738 588l7-7M742 588l7-7M661 655l7-7M665 655l7-7M849 253q0-11 11-11M849 669q0-11 11-11M740 661q0-11 11-11"/>
          <circle cx="851" cy="245" r="2"/><circle cx="851" cy="661" r="2"/><circle cx="742" cy="653" r="2"/>
          <text x="862" y="237">27</text><text x="674" y="253">24</text><text x="796" y="297">31</text><text x="750" y="320">32</text><text x="750" y="337">24</text><text x="751" y="574">32</text><text x="751" y="591">26</text><text x="796" y="600">31</text><text x="674" y="658">26</text><text x="862" y="653">27</text>
        </g>

        <g class="navcube">
          <path d="M400 814l11 12h-22zM400 944l11-12h-22zM334 879l13-11v22zM466 879l-13-11v22z"/>
          <circle cx="457.500" cy="821.500" r="6"/>
          <path d="M380 820l2 6q-14 4-21 13l4 3-14 5 1-14 4 3q8-11 24-16zM420 820l-2 6q14 4 21 13l-4 3 14 5-1-14-4 3q-8-11-24-16z"/>
          <path d="M379 847h42l11 11v42l-11 11h-42l-11-11v-42z"/>
          <path d="M383 855h34l7 7v34l-7 7h-34l-7-7v-34zM383 847v8M417 847v8M383 903v8M417 903v8M368 862h8M368 896h8M424 862h8M424 896h8" />
          <path d="M435 921l10-5 10 4v11l-10 5-10-4zM435 921l10 3 10-4M445 924v11"/>
          <text x="400" y="884" text-anchor="middle">RIGHT</text>
        </g>
        <path d="M365.500 864v49" stroke="#1010d0" stroke-width="2"/><path d="M365 914h52" stroke="#18d818" stroke-width="2"/>
        <path class="cube-grid" d="M422 849v62"/>

        <g class="triad">
          <path d="M1285 908v-16" stroke="#23238c" stroke-width="2"/><path d="M1285 882l4 12h-8z" fill="#23238c"/>
          <path d="M1285 910h20" stroke="#1f8a2a" stroke-width="2"/><path d="M1313 910l-10-4v8z" fill="#1f8a2a"/>
          <circle cx="1285" cy="910" r="3" fill="#a83026"/>
          <text x="1286" y="881">Z</text><text x="1286" y="909">X</text><text x="1314" y="909">Y</text>
        </g>
      </svg>
      <div class="tabs">
        <div class="tab"><svg class="tab-icon"><use href="#logo"/></svg><a href="#">Start page</a><button aria-label="Close Start page"><svg><use href="#x"/></svg></button></div>
        <div class="tab current"><svg class="tab-icon"><use href="#doc"/></svg><a href="#">3Dprinting_assignment : 1*</a><button aria-label="Close 3Dprinting_assignment"><svg><use href="#x"/></svg></button></div>
      </div>
    </section>

    <aside class="tasks">
      <div class="tasks-main">
        <div class="dock-head">
          <h2>Tasks</h2>
          <button aria-label="Collapse"><svg><use href="#dock"/></svg></button><button aria-label="Float"><svg><use href="#float"/></svg></button><button aria-label="Close tasks"><svg><use href="#x"/></svg></button>
        </div>
        <div class="tasks-scroll">
          <div class="tasks-body">
            <button class="close">Close</button>

            <section class="group">
              <h3><svg class="note"><use href="#note"/></svg>Solver messages<svg class="fold"><use href="#up"/></svg></h3>
              <div class="group-body solver">
                <span>Fully constrained</span>
                <button class="sq drop" aria-label="Update"><svg viewBox="0 0 28 28"><use href="#sync"/></svg></button>
              </div>
            </section>

            <section class="group">
              <h3><svg class="note"><use href="#note"/></svg>Constraints<svg class="fold"><use href="#up"/></svg></h3>
              <div class="group-body">
                <div class="filters">
                  <input type="checkbox" class="box" aria-label="Filter constraints" checked>
                  <button class="filter drop">Filters</button>
                  <button class="sq" aria-label="Show constraints"><svg viewBox="0 0 20 20"><path d="M1 10q9-12 18 0-9 12-18 0z" fill="#e8eef6"/><circle cx="10" cy="10" r="5" fill="#3465a4"/><circle cx="10" cy="10" r="2.500" fill="#10243f"/></svg></button>
                  <button class="sq drop" aria-label="Constraint settings"><svg><use href="#tools"/></svg></button>
                </div>
                <div class="list-wrap">
                  <div class="list-view">
                    <ul class="constraints">
                      <li><label><input type="checkbox" checked><svg><use href="#point"/></svg>Constraint1</label></li>
                      <li><label><input type="checkbox" checked><svg><use href="#on-arc"/></svg>Constraint2</label></li>
                      <li><label><input type="checkbox" checked><svg><use href="#point"/></svg>Constraint3</label></li>
                      <li><label><input type="checkbox" checked><svg><use href="#point"/></svg>Constraint4</label></li>
                      <li><label><input type="checkbox" checked><svg><use href="#vert"/></svg>Constraint5</label></li>
                      <li><label><input type="checkbox" checked><svg><use href="#point"/></svg>Constraint6</label></li>
                      <li><label><input type="checkbox" checked><svg><use href="#point"/></svg>Constraint7</label></li>
                      <li><label><input type="checkbox" checked><svg></svg>Constraint8</label></li>
                    </ul>
                  </div>
                  <div class="list-bar"><i></i><svg><use href="#down"/></svg></div>
                </div>
              </div>
            </section>

            <section class="group">
              <h3><svg class="note"><use href="#note"/></svg>Elements<svg class="fold"><use href="#up"/></svg></h3>
              <div class="group-body">
                <div class="filters">
                  <input type="checkbox" class="box" aria-label="Filter elements" checked>
                  <button class="filter drop">Filters</button>
                  <button class="sq drop" aria-label="Element settings"><svg><use href="#tools"/></svg></button>
                </div>
                <ul class="elements">
                  <li><label><input type="checkbox" checked><svg><use href="#lines"/></svg><i></i><span>1-Line</span></label></li>
                  <li><label><input type="checkbox" checked><svg><use href="#lines"/></svg><i></i><span>2-Line</span></label></li>
                  <li><label><input type="checkbox" checked><svg><use href="#lines"/></svg><i></i><span>3-Line</span></label></li>
                  <li><label><input type="checkbox" checked><svg><use href="#lines"/></svg><i></i><span>4-Line</span></label></li>
                  <li><label><input type="checkbox" checked><svg><use href="#lines"/></svg><i></i><span>5-Line</span></label></li>
                  <li><label><input type="checkbox" checked><svg><use href="#lines"/></svg><i></i><span>6-Line</span></label></li>
                  <li><label><input type="checkbox" checked><svg><use href="#lines"/></svg><i></i><span>7-Line</span></label></li>
                  <li><label><input type="checkbox" checked><svg><use href="#lines"/></svg><i></i><span>8-Line</span></label></li>
                  <li><label><input type="checkbox" checked><svg><use href="#lines"/></svg><i></i><span>9-Line</span></label></li>
                  <li><label><input type="checkbox" checked><svg><use href="#lines"/></svg><i></i><span>10-Line</span></label></li>
                  <li><label><input type="checkbox" checked><svg><use href="#lines"/></svg><i></i><span>11-Line</span></label></li>
                  <li><label><input type="checkbox" checked><svg><use href="#lines"/></svg><i></i><span>12-Line</span></label></li>
                </ul>
              </div>
            </section>
          </div>
          <div class="main-bar"><svg><use href="#up"/></svg><i></i><svg><use href="#down"/></svg></div>
        </div>
      </div>
    </aside>
  </main>

  <footer class="status">
    <span class="msg">Valid, Internal name: Fillet</span>
    <button class="stat notify" aria-label="Notifications"><svg class="stat-icon" viewBox="0 0 18 18"><path d="M0 0h18v18H0z" fill="#fff"/><path d="M2 4h14v12H2z" fill="#2b58a5"/><path d="M4 6l5 4 5-4" fill="none" stroke="#1b3e7c"/></svg><svg class="caret"><use href="#caret"/></svg></button>
    <div class="stat nav"><svg class="mouse" viewBox="0 0 12 18"><rect x="1" y="1" width="10" height="16" rx="5" fill="none" stroke="#333" stroke-width="2"/><path d="M6 4v6" stroke="#333" stroke-width="3"/></svg><select aria-label="Navigation style"><option>Blender</option></select><svg class="caret"><use href="#caret"/></svg></div>
    <div class="stat size"><select aria-label="View dimensions"><option>73.35 mm x 60.42 mm</option></select><svg class="caret"><use href="#caret"/></svg></div>
    <svg class="resize" viewBox="0 0 16 22"><path d="M1 22L16 4M7 22l9-11M13 22l3-4" stroke="#aaa" stroke-width="1.500"/></svg>
  </footer>
</div>
</body>
</html>
```

FILE: styles.css
```css
* { box-sizing: border-box; }

body {
  margin: 0;
  background: #2b2b2b;
  color: #e6e6e6;
  font-family: "Open Sans", "Noto Sans", sans-serif;
  font-size: 12px;
  line-height: 18px;
}

button, select, input { margin: 0; padding: 0; border: 0; background: none; color: inherit; font: inherit; }
select { appearance: none; outline: 0; }
h2, h3, ul { margin: 0; padding: 0; font: inherit; list-style: none; }
a { color: inherit; text-decoration: none; }
svg { display: block; flex: none; }
.defs { position: absolute; width: 0; height: 0; }

.app { display: flex; flex-direction: column; height: 100vh; overflow: hidden; }

/* window title */
.titlebar { display: flex; align-items: center; height: 29px; padding: 0 20px 8px 8px; background: #f3f3f3; color: #888; font-size: 14px; }
.logo { width: 20px; height: 20px; }
.app-name { flex: 1; margin-left: 8px; }
.win { display: flex; gap: 34px; }
.win button { width: 24px; display: flex; justify-content: center; }
.win svg { width: 12px; height: 12px; }

.menubar { display: flex; gap: 18px; align-items: center; height: 26px; padding: 1px 14px 0; background: #151515; color: #f0f0f0; font-size: 14px; }
.menubar u { text-underline-offset: 3px; }

/* toolbars */
.toolbars { padding-bottom: 2px; }
.toolbar { display: flex; align-items: center; height: 36px; }
.toolbar > button { position: relative; width: 35px; height: 36px; display: flex; align-items: center; justify-content: center; }
.toolbar > button > svg { width: 28px; height: 28px; }
.grip { width: 19px; height: 28px; padding: 0 2px 0 8px; background: radial-gradient(circle at 2px 2px, #777 1px, transparent 2px) 0 0 / 4px 4px content-box; }
.grip:first-child { width: 17px; }
.sep { width: 14px; }
.drop { position: relative; }
.drop::after { content: ""; position: absolute; right: 3px; bottom: 3px; width: 10px; height: 10px; background: #fff; clip-path: polygon(100% 0, 100% 100%, 0 100%); }
.w { fill: none; stroke: #ececec; stroke-width: 2; }
.heavy { stroke-width: 3; }
.r { fill: none; stroke: #d8141c; stroke-width: 2; }
path.g, ellipse.g { fill: none; stroke: #a6a6a6; stroke-width: 2; }
.rd { fill: #d8141c; stroke: #6d0a0e; stroke-width: .6; }
.gd { fill: #a0a0a0; }

.combo { display: flex; align-items: center; width: 121px; height: 23px; margin-left: 1px; padding-left: 4px; background: #15161d; font-size: 13px; color: #fff; }
.combo > svg { width: 18px; height: 18px; }
.combo select { flex: 1; min-width: 0; margin-left: 8px; }
.combo-arrow { display: flex; align-items: center; justify-content: center; width: 19px; height: 22px; background: #696969; }
.combo-arrow svg { width: 12px; height: 8px; }

.main { display: flex; flex: 1; min-height: 0; }
.dock-head { display: flex; align-items: center; height: 17px; gap: 9px; color: #f0f0f0; }
.dock-head h2 { flex: 1; text-align: center; }
.dock-head button { color: #757575; }
.dock-head svg { width: 14px; height: 14px; }

/* model tree */
.tree-panel { width: 328px; flex: none; }
.tree-panel .dock-head { padding: 0 9px 0 16px; }
.tree { display: grid; grid-auto-rows: 1fr; width: 224px; height: 292px; font-size: 14px; color: #bdbdbd; }
.tree li { display: flex; align-items: stretch; }
.g { flex: none; }
span.g { position: relative; width: 25px; display: flex; align-items: center; justify-content: center; }
span.v::before, span.t::before, span.l::before { content: ""; position: absolute; left: 12px; top: 0; bottom: 0; width: 1px; background: #555; }
span.l::before, .tree li:first-child .t::before { bottom: 50%; }
span.t::after, span.l::after { content: ""; position: absolute; left: 12px; right: 1px; top: 50%; height: 1px; background: #555; }
span.g svg { position: relative; z-index: 1; }
.dn { width: 12px; height: 8px; }
.rt { width: 8px; height: 12px; }
.node { display: flex; flex: 1; align-items: center; gap: 9px; padding-left: 5px; white-space: nowrap; }
.node svg { width: 18px; height: 18px; }
.root { color: #fff; font-weight: 700; }
.lit { color: #f4f4f4; }
.selected { background: #5179b5; }
.active { background: #22262c; color: #dcdcdc; font-weight: 700; }
.c-grey { color: #a5a5a5; }
.c-blue { color: #3f73b8; }
.c-dim { color: #8a8a8a; }

/* 3D view */
.center { display: flex; flex: 1; flex-direction: column; min-width: 0; }
.view3d { flex: 1; width: 100%; min-height: 0; background: linear-gradient(#373b43, #2c3037 45%, #24272f 75%, #22252d); }
.grid path { stroke: #9699a0; stroke-width: 1; stroke-dasharray: 5 3; shape-rendering: crispEdges; }
.axis-x { stroke: #c4535e; stroke-width: 2; }
.axis-y { stroke: #7de38a; stroke-width: 2; }
.edge path { fill: none; stroke: #78b31b; stroke-width: 3; }
.edge.pale path { stroke: #c6d8a4; stroke-width: 2; }
.dim { fill: none; stroke: #d3d5da; stroke-width: 2; }
.vertex { fill: #86c22c; }
.heads { fill: #dfe1e5; }
.dim-text { fill: #d8dade; font-size: 18px; font-family: "Open Sans", sans-serif; font-weight: 300; }
.marks { fill: #f74e5a; font-size: 14px; font-weight: 600; font-family: "Open Sans", sans-serif; }
.marks path { fill: none; stroke: #f0505a; stroke-width: 2; }
.navcube { fill: #82868f; stroke: #111318; stroke-width: 1; }
.navcube text { fill: #15171b; stroke: none; font: 14px "Liberation Sans", sans-serif; }
.cube-grid { stroke: #b0b2b6; stroke-dasharray: 5 3; }
.triad text { font: 700 10px "Liberation Sans", sans-serif; fill: #000; }

.tabs { display: flex; justify-content: center; align-items: flex-start; gap: 5px; height: 36px; padding: 2px 0 0 3px; }
.tab { display: flex; align-items: center; height: 33px; padding: 0 8px 0 7px; border: 2px solid #5f5f5f; border-radius: 4px; background: #2b2b2b; color: #f0f0f0; }
.tab.current { height: 35px; background: #696969; border-color: #696969; }
.tab-icon { width: 18px; height: 18px; margin-right: 13px; }
.tab a { margin-right: 18px; }
.tab button { color: #808080; }
.tab.current button { color: #a8a8a8; }
.tab button svg { width: 16px; height: 16px; }

/* task panel */
.tasks { display: flex; width: 594px; flex: none; padding-left: 18px; }
.tasks-main { flex: 1; display: flex; flex-direction: column; min-width: 0; min-height: 0; }
.tasks .dock-head { padding: 0 2px 0 8px; }
.tasks-scroll { display: flex; flex: 1; min-height: 0; gap: 12px; }
.tasks-body { display: flex; flex: 1; flex-direction: column; gap: 10px; overflow: hidden; padding-top: 21px; color: #f0f0f0; }
.close { align-self: center; width: 105px; height: 21px; margin-bottom: 11px; flex: none; border-radius: 2px; background: #696969; }
.group { flex: none; border: 1px solid #696969; border-radius: 3px; }
.group h3 { display: flex; align-items: center; height: 31px; padding: 0 9px; background: #696969; font-weight: 700; }
.note { width: 16px; height: 20px; margin-right: 5px; }
.fold { width: 12px; height: 8px; margin-left: auto; }
.group-body { padding: 15px 17px 17px 16px; }
.solver { display: flex; justify-content: space-between; align-items: center; height: 54px; padding: 0 17px 0 22px; color: #00f000; font-weight: 700; }
.sq { width: 26px; height: 26px; display: flex; align-items: center; justify-content: center; background: #696969; flex: none; }
.solver .sq { height: 22px; }
.sq svg { width: 20px; height: 20px; }
.sq.drop::after, .filter.drop::after { right: 2px; bottom: 2px; }
.filters { display: flex; align-items: center; gap: 7px; margin-bottom: 8px; }
.filter { flex: 1; height: 26px; background: #696969; }
.box { margin: 0 9px 0 2px; }

input[type=checkbox] { appearance: none; position: relative; flex: none; width: 15px; height: 15px; }
input.box { border: 1px solid #e6e6e6; border-radius: 2px; background: #111; }
input[type=checkbox]:checked::before { content: ""; position: absolute; inset: 2px; background: currentColor; clip-path: polygon(4% 50%, 20% 42%, 40% 72%, 80% 0, 96% 4%, 46% 100%, 34% 100%); }
input.box:checked::before { inset: 1px; color: #fff; clip-path: polygon(0 45%, 22% 36%, 40% 58%, 80% 5%, 100% 18%, 44% 95%, 34% 95%); }

.list-wrap { display: flex; gap: 2px; }
.list-view { flex: 1; height: 240px; overflow: hidden; background: #000; }
.constraints { display: grid; grid-auto-rows: 1fr; height: 261px; font-size: 14px; }
.constraints label { display: flex; align-items: center; height: 100%; padding-left: 6px; }
.constraints svg { width: 26px; height: 26px; margin: 0 10px 0 9px; }
.list-bar { display: flex; flex-direction: column; justify-content: space-between; width: 17px; }
.list-bar i { width: 15px; height: 43px; background: #696969; border-radius: 1px; }
.list-bar svg { width: 12px; height: 8px; margin-left: 2px; }

.elements { background: #000; font-size: 14px; }
.elements label { display: flex; align-items: center; height: 20px; line-height: 16px; }
.elements span { padding-bottom: 3px; }
.elements input { width: 18px; height: 18px; background: #fff; color: #000; border: 1px solid #bbb; }
.elements svg { width: 56px; height: 18px; margin: 0 8px 0 7px; }
.elements i { width: 7px; height: 1px; margin-right: 11px; background: #3c3c3c; }

.main-bar { display: flex; flex-direction: column; align-items: center; width: 18px; }
.main-bar i { flex: 1; width: 15px; margin: 11px 0 28px; border-radius: 2px; background: #696969; }
.main-bar svg { width: 12px; height: 8px; }

/* status bar */
.status { display: flex; align-items: center; height: 35px; flex: none; gap: 8px; padding: 2px 0 0 8px; color: #f0f0f0; }
.msg { flex: 1; }
.stat { display: flex; align-items: center; height: 24px; background: #696969; }
.stat select { flex: 1; min-width: 0; }
.stat-icon { width: 18px; height: 18px; }
.caret { width: 10px; height: 7px; }
.notify { width: 45px; padding: 0 3px; justify-content: space-between; }
.nav { width: 95px; padding: 0 2px 0 13px; }
.mouse { width: 12px; height: 18px; margin-right: 7px; }
.size { width: 150px; height: 22px; padding: 0 2px 0 4px; }
.resize { width: 16px; height: 22px; align-self: flex-end; }
```
